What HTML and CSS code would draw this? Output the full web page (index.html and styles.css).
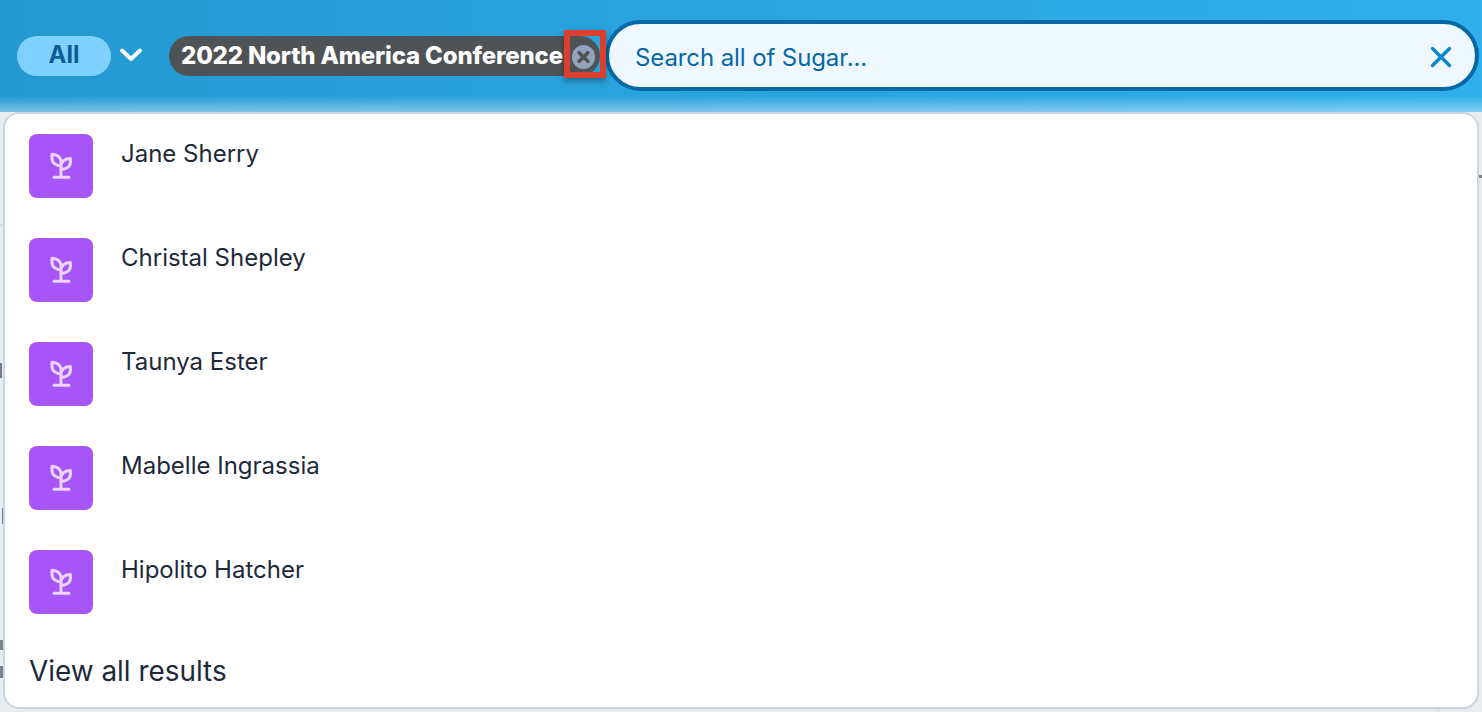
FILE: index.html
```html
<!DOCTYPE html>
<html lang="en">
<head>
<meta charset="utf-8">
<title>Search all of Sugar</title>
<link rel="stylesheet" href="styles.css">
</head>
<body>
<svg class="defs" width="0" height="0" aria-hidden="true">
  <symbol id="sprout" viewBox="0 0 32 32">
    <path d="M16 16v11.300M9 27.300h15M7 4.200c5.200 0 9 3.400 9 8V16c-5.200 0-9-3.400-9-8zM25.500 8.500c-5.500 0-9.500 3-9.500 7.500v3.500c5.500 0 9.500-3 9.500-7.500z" fill="none" stroke="currentColor" stroke-width="3" stroke-linecap="round" stroke-linejoin="round"/>
  </symbol>
</svg>
<div class="specks" aria-hidden="true">
  <i class="speck speck-a"></i><i class="speck speck-b"></i><i class="speck speck-c"></i><i class="speck speck-d"></i><i class="speck speck-e"></i><i class="speck speck-f"></i><i class="speck speck-g"></i>
</div>
<header class="topbar">
  <span class="module-pill">All</span>
  <svg class="chevron" viewBox="0 0 24 16" aria-hidden="true"><path d="M3 3.500l9 8.500 9-8.500" fill="none" stroke="currentColor" stroke-width="3.800" stroke-linecap="round" stroke-linejoin="round"/></svg>
  <div class="tag">
    <span class="tag-label">2022 North America Conference</span>
    <span class="tag-close">
      <svg viewBox="0 0 24 24" aria-hidden="true"><path d="M7.500 7.500l9 9M16.500 7.500l-9 9" fill="none" stroke="currentColor" stroke-width="3.800" stroke-linecap="round"/></svg>
    </span>
    <span class="annotation"></span>
  </div>
  <div class="search">
    <span class="search-text">Search all of Sugar...</span>
    <svg class="search-clear" viewBox="0 0 24 24" aria-hidden="true"><path d="M3.500 3.500l17 17M20.500 3.500l-17 17" fill="none" stroke="currentColor" stroke-width="3.400" stroke-linecap="round"/></svg>
  </div>
</header>
<main class="stage">
  <section class="dropdown">
    <ul class="results">
      <li class="result"><span class="avatar"><svg><use href="#sprout"/></svg></span><span class="name">Jane Sherry</span></li>
      <li class="result"><span class="avatar"><svg><use href="#sprout"/></svg></span><span class="name">Christal Shepley</span></li>
      <li class="result"><span class="avatar"><svg><use href="#sprout"/></svg></span><span class="name">Taunya Ester</span></li>
      <li class="result"><span class="avatar"><svg><use href="#sprout"/></svg></span><span class="name">Mabelle Ingrassia</span></li>
      <li class="result"><span class="avatar"><svg><use href="#sprout"/></svg></span><span class="name">Hipolito Hatcher</span></li>
    </ul>
    <div class="view-all">View all results</div>
  </section>
</main>
</body>
</html>
```
FILE: styles.css
```css
* { box-sizing: border-box; }
html, body { margin: 0; height: 100%; overflow: hidden; }
body {
  position: relative;
  display: flex;
  flex-direction: column;
  font-family: Inter, "Liberation Sans", sans-serif;
  background: #e9ecef;
}
.defs { position: absolute; }
.speck { position: absolute; background: #7d8287; }
.speck-a { left: 0; top: 363px; width: 2px; height: 15px; background: #6f7a8c; }
.speck-b { left: 2px; top: 508px; width: 1px; height: 16px; background: #6f7a8c; }
.speck-c { left: 0; top: 640px; width: 3px; height: 10px; }
.speck-d { left: 0; top: 666px; width: 3px; height: 12px; }
.speck-e { left: 1479px; top: 175px; width: 3px; height: 3px; }
.speck-f { left: 0; top: 224px; width: 3px; height: 2px; background: #d5dbe3; }
.speck-g { left: 1438px; top: 708px; width: 1px; height: 4px; background: #d5dbe3; }
.topbar {
  flex: none;
  height: 112px;
  display: flex;
  align-items: flex-start;
  padding: 20px 3px 0 17px;
  background:
    linear-gradient(to bottom, rgba(255,255,255,0) 96px, rgba(255,255,255,.4) 112px),
    linear-gradient(to right, #2499d2, #30afec);
}
.module-pill {
  width: 94px;
  height: 40px;
  margin-top: 16px;
  border-radius: 20px;
  background: #80d1ff;
  color: #0b5f93;
  font-size: 24px;
  font-weight: 700;
  line-height: 38px;
  text-align: center;
}
.chevron {
  width: 24px;
  height: 16px;
  margin: 27px 0 0 8px;
  color: #fff;
}
.tag {
  position: relative;
  width: 431px;
  height: 40px;
  margin: 16px 0 0 26px;
  display: flex;
  align-items: center;
  padding: 0 0 2px 12px;
  border-radius: 20px;
  background: #505356;
  color: #fff;
}
.tag-label { font-size: 24px; font-weight: 800; white-space: nowrap; letter-spacing: -.17px; }
.tag-close {
  position: absolute;
  left: 403px;
  top: 9px;
  width: 23px;
  height: 24px;
  border-radius: 50%;
  background: #94a3bd;
  color: #505356;
  display: flex;
  align-items: center;
  justify-content: center;
}
.tag-close svg { width: 23px; height: 24px; }
.annotation {
  position: absolute;
  left: 395px;
  top: -6px;
  width: 42px;
  height: 48px;
  border: 6px solid #d9402f;
  box-shadow: 0 3px 6px rgba(0,0,0,.35);
}
.search {
  flex: 1;
  height: 71px;
  margin-left: 5px;
  display: flex;
  align-items: center;
  justify-content: space-between;
  padding: 2px 22px 0 26px;
  border: 4px solid #0668a5;
  border-radius: 36px;
  background: #eff8ff;
}
.search-text { margin-top: 2px; color: #0668a5; font-size: 24px; letter-spacing: -.1px; }
.search-clear { width: 24px; height: 24px; color: #0a86cb; }
.stage { flex: 1; min-height: 0; position: relative; padding: 0 3px 3px 3px; }
.dropdown {
  height: 100%;
  display: flex;
  flex-direction: column;
  padding: 0 24px;
  background: #fff;
  border: 2px solid #cbd5e1;
  border-radius: 16px;
}
.results { list-style: none; margin: 0; padding: 20px 0 0; }
.result {
  display: flex;
  align-items: flex-start;
  gap: 28px;
  height: 104px;
}
.avatar {
  flex: none;
  width: 64px;
  height: 64px;
  display: flex;
  align-items: center;
  justify-content: center;
  border-radius: 8px;
  background: #a855f7;
  color: #e9d5ff;
}
.avatar svg { width: 32px; height: 32px; }
.name { color: #1e293b; font-size: 24px; line-height: 40px; }
.view-all { margin-top: -3px; color: #1e293b; font-size: 27.9px; line-height: 40px; }
```
